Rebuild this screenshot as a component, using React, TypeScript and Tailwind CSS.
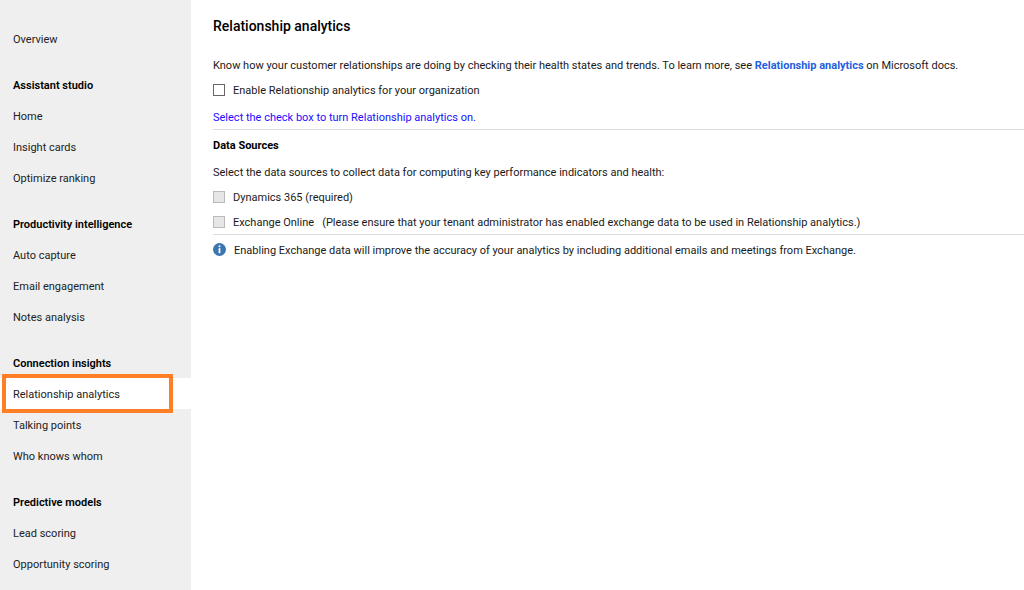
const groups = [
  { title: "Assistant studio", items: ["Home", "Insight cards", "Optimize ranking"] },
  { title: "Productivity intelligence", items: ["Auto capture", "Email engagement", "Notes analysis"] },
  { title: "Connection insights", items: ["Relationship analytics", "Talking points", "Who knows whom"] },
  { title: "Predictive models", items: ["Lead scoring", "Opportunity scoring"] },
];

const current = "Relationship analytics";

function NavItem({ label }: { label: string }) {
  const active = label === current;
  return (
    <li className={active ? "relative bg-white" : ""}>
      <a
        href="#"
        aria-current={active ? "page" : undefined}
        className="flex h-[31px] items-center pt-0.5 pl-[13px] text-[#222]"
      >
        {label}
      </a>
      {active && (
        <span className="pointer-events-none absolute -top-1 -bottom-1 left-0.5 right-[18px] border-4 border-[#ff7f27]" />
      )}
    </li>
  );
}

function Check({ id, label, disabled = false }: { id: string; label: string; disabled?: boolean }) {
  return (
    <div className="flex h-[25px] items-center gap-2">
      <input
        id={id}
        type="checkbox"
        disabled={disabled}
        className="size-3 shrink-0 appearance-none border border-[#666] bg-white checked:bg-[#3b79b7] disabled:border-[#bbb] disabled:bg-[#e6e6e6]"
      />
      <label htmlFor={id} className="pt-0.5">{label}</label>
    </div>
  );
}

export default function App() {
  return (
    <div className="flex min-h-screen bg-white font-['Roboto','Open_Sans',sans-serif] text-[11px] leading-4 text-[#1a1a1a]">
      <nav className="w-[191px] shrink-0 bg-[#efefef] pt-[23px]">
        <ul>
          <NavItem label="Overview" />
        </ul>
        <div className="mt-[15px] flex flex-col gap-[15px]">
          {groups.map((g) => (
            <section key={g.title}>
              <h2 className="flex h-[31px] items-center pt-0.5 pl-[13px] font-semibold text-black">{g.title}</h2>
              <ul>
                {g.items.map((i) => (
                  <NavItem key={i} label={i} />
                ))}
              </ul>
            </section>
          ))}
        </div>
      </nav>

      <main className="min-w-0 flex-1 pt-4 pl-[22px]">
        <h1 className="text-[14px] leading-5 font-medium text-black">Relationship analytics</h1>
        <p className="mt-[22px]">
          Know how your customer relationships are doing by checking their health states and trends. To learn more, see{" "}
          <a href="#" className="font-bold text-[#1f5fe0]">Relationship analytics</a> on Microsoft docs.
        </p>
        <div className="mt-[3px]">
          <Check id="enable" label="Enable Relationship analytics for your organization" />
        </div>
        <p className="mt-2 text-[#1a0dff]">Select the check box to turn Relationship analytics on.</p>

        <section className="mt-[3px] border-t border-[#dcdcdc] pt-2">
          <h2 className="font-bold text-black">Data Sources</h2>
          <p className="mt-[11px] mb-[3px]">
            Select the data sources to collect data for computing key performance indicators and health:
          </p>
          <Check id="dynamics" label="Dynamics 365 (required)" disabled />
          <div className="flex items-center gap-2">
            <Check id="exchange" label="Exchange Online" disabled />
            <span className="pt-0.5">
              (Please ensure that your tenant administrator has enabled exchange data to be used in Relationship
              analytics.)
            </span>
          </div>
        </section>

        <div className="flex items-start gap-2 border-t border-[#dcdcdc] pt-2">
          <svg viewBox="0 0 13 13" className="size-[13px] shrink-0" aria-hidden="true">
            <circle cx="6.5" cy="6.5" r="6.5" fill="#3b76b0" />
            <circle cx="6.5" cy="3.2" r="1" fill="#fff" />
            <path d="M5.6 5.2h1.8v5H5.6z" fill="#fff" />
          </svg>
          <p>
            Enabling Exchange data will improve the accuracy of your analytics by including additional emails and
            meetings from Exchange.
          </p>
        </div>
      </main>
    </div>
  );
}
